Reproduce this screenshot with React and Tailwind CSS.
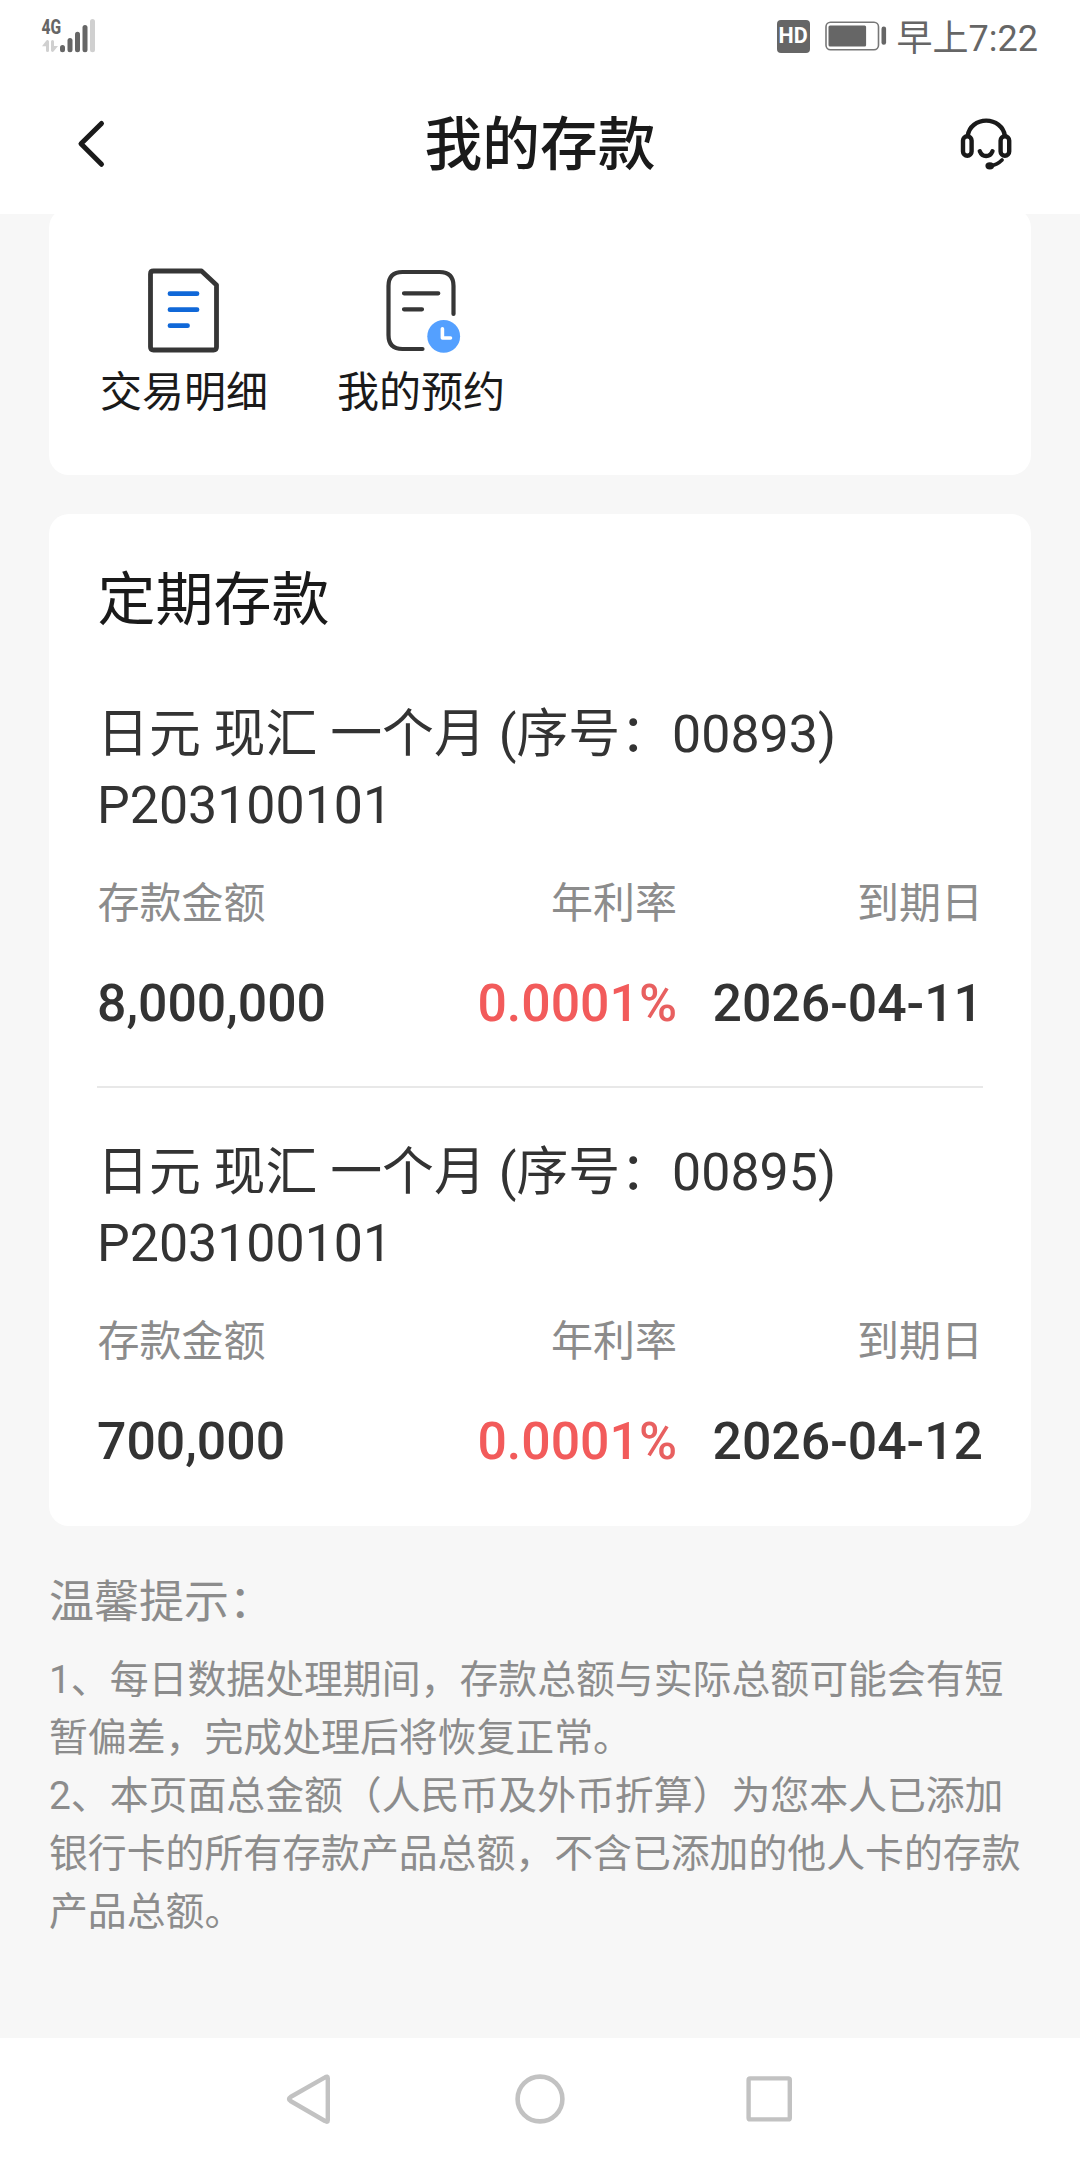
const deposits = [
  { name: '日元 现汇 一个月 (序号：00893)', code: 'P203100101', amount: '8,000,000', rate: '0.0001', due: '2026-04-11' },
  { name: '日元 现汇 一个月 (序号：00895)', code: 'P203100101', amount: '700,000', rate: '0.0001', due: '2026-04-12' },
];

const tips = [
  '1、每日数据处理期间，存款总额与实际总额可能会有短',
  '暂偏差，完成处理后将恢复正常。',
  '2、本页面总金额（人民币及外币折算）为您本人已添加',
  '银行卡的所有存款产品总额，不含已添加的他人卡的存款',
  '产品总额。',
];

function SignalIcon() {
  return (
    <svg width="66" height="44" viewBox="36 14 66 44" className="block overflow-visible">
      <text x="41.500" y="34" fontSize="20.500" fontWeight="800" textLength="19.600" lengthAdjust="spacingAndGlyphs" fill="#666">4G</text>
      <g fill="#d0d0d0">
        <path d="M47 40a1.700 1.700 0 0 1 2 1.600V50.500a1.500 1.500 0 0 1-3 0V46.200H42L46 41z" />
        <path d="M51 41.500a1.500 1.500 0 0 1 3 0V46H58L53.500 51.500a1.500 1.500 0 0 1-2.500-1z" />
        <rect x="90" y="19" width="5" height="33.300" rx="2.500" />
      </g>
      <g fill="#666">
        <rect x="60" y="45" width="5" height="7.300" rx="2.500" />
        <rect x="67.500" y="38" width="5" height="14.300" rx="2.500" />
        <rect x="75" y="31.700" width="5" height="20.600" rx="2.500" />
        <rect x="82.500" y="25" width="5" height="27.300" rx="2.500" />
      </g>
    </svg>
  );
}

function BatteryIcon() {
  return (
    <svg width="62" height="30" viewBox="825.500 21.500 62 30" className="block">
      <rect x="826.500" y="22.700" width="52.500" height="27.600" rx="4.500" fill="none" stroke="#777" strokeWidth="1.600" />
      <rect x="829" y="26" width="37.600" height="21" rx="1.500" fill="#666" />
      <rect x="882" y="27" width="4.600" height="18.300" rx="2.200" fill="#666" />
    </svg>
  );
}

function HeadsetIcon() {
  return (
    <svg width="54" height="54" viewBox="959 117 54 54" fill="none" stroke="#1a1a1a" strokeWidth="4.400" strokeLinecap="round" className="block">
      <path d="M967.800 135.500C969 126.500 977 120.600 986.200 120.600S1003.500 126.500 1004.800 135.500" />
      <rect x="963" y="136.300" width="8.600" height="19.400" rx="4.300" />
      <rect x="1000.600" y="136.300" width="8.600" height="19.400" rx="4.300" />
      <path d="M979.800 151.200C981 154.200 983.300 156 986.100 156S991.300 154.200 992.500 151.200" />
      <path d="M1002 160C999 163 996 165 991 165.600" strokeWidth="3.800" />
      <ellipse cx="989.800" cy="165.800" rx="4.400" ry="3.600" fill="#1a1a1a" stroke="none" />
    </svg>
  );
}

function DetailIcon() {
  return (
    <svg width="76" height="88" viewBox="146 266 76 88" fill="none" strokeWidth="4.800" strokeLinecap="round" strokeLinejoin="round" className="block">
      <path d="M153.500 271H201.500L216.500 285V347Q216.500 350 213.500 350H153.500Q150.500 350 150.500 347V274Q150.500 271 153.500 271Z" stroke="#363636" />
      <path d="M170 293.700H197M170 309.700H197M170 325.700H187.500" stroke="#1068d8" />
    </svg>
  );
}

function BookingIcon() {
  return (
    <svg width="78" height="88" viewBox="382 266 78 88" fill="none" strokeWidth="4.200" strokeLinecap="round" strokeLinejoin="round" className="block overflow-visible">
      <path d="M453.500 314V286Q453.500 272 439.500 272H402.500Q388.500 272 388.500 286V335Q388.500 349 402.500 349H422.500M404 293.300H438.300M404 309.300H422" stroke="#363636" />
      <circle cx="443.700" cy="336.300" r="16.400" fill="#54a0ff" />
      <path d="M442.400 328.800V338H450.500" stroke="#fff" strokeWidth="3.600" />
    </svg>
  );
}

function Deposit({ item }) {
  return (
    <div className="text-[#333]">
      <div className="whitespace-nowrap text-[51.880px] leading-[71px]">
        <p>{item.name}</p>
        <p>{item.code}</p>
      </div>
      <div className="mt-[33px] flex text-[42px] leading-[60px] text-[#8c8c8c]">
        <span className="w-[300px] pl-[0.600px]">存款金额</span>
        <span className="w-[280px] text-right">年利率</span>
        <span className="flex-1 text-right">到期日</span>
      </div>
      <div className="mt-[35px] flex whitespace-nowrap text-[51.760px] font-medium leading-[70px]">
        <span className="w-[300px]">{item.amount}</span>
        <span className="w-[280px] text-right text-[#f25b5b]">
          {item.rate}
          <span className="text-[#e86060]">%</span>
        </span>
        <span className="flex-1 text-right">{item.due}</span>
      </div>
    </div>
  );
}

export default function App() {
  return (
    <div className="flex h-[2160px] w-[1080px] flex-col overflow-hidden bg-[#f7f7f7] font-['Roboto','Noto_Sans_CJK_SC',sans-serif]">
      <div className="z-10 h-[214px] shrink-0 bg-white">
        <div className="flex h-[75px] items-center justify-between pb-[3px] pl-[36px] pr-[42px]">
          <SignalIcon />
          <div className="flex items-center">
            <span className="flex h-[33px] w-[33px] items-center justify-center rounded-[4px] bg-[#666] text-[21.500px] font-bold leading-none text-white">HD</span>
            <span className="ml-[15px]"><BatteryIcon /></span>
            <span className="ml-[10px] pt-[5px] text-[36px] leading-[36px] text-[#666]">早上7:22</span>
          </div>
        </div>
        <header className="flex h-[139px] items-center justify-between pb-[1px] pl-[76px] pr-[67px]">
          <svg width="54" height="54" viewBox="76 117 54 54" fill="none" stroke="#1a1a1a" strokeWidth="5" strokeLinecap="round" strokeLinejoin="round">
            <path d="M101.500 123.400L81 143.800L101.500 164.300" />
          </svg>
          <h1 className="pr-[9px] pt-[1px] text-[57.700px] font-medium leading-[70px] text-[#1a1a1a]">我的存款</h1>
          <HeadsetIcon />
        </header>
      </div>

      <main className="flex-1 px-[49px]">
        <section className="-mt-[6px] flex h-[267px] gap-[69px] rounded-[20px] bg-white pl-[51px] pt-[58px] text-[42px] leading-[52px] text-[#1a1a1a]">
          <div className="flex flex-col items-center">
            <DetailIcon />
            <span className="mt-[13px]">交易明细</span>
          </div>
          <div className="flex flex-col items-center">
            <BookingIcon />
            <span className="mt-[13px]">我的预约</span>
          </div>
        </section>

        <section className="mt-[39px] h-[1012px] rounded-[20px] bg-white px-[48px] pt-[46px]">
          <h2 className="pl-[0.500px] text-[58px] leading-[80px] text-[#1a1a1a]">定期存款</h2>
          <div className="mt-[59px]">
            <Deposit item={deposits[0]} />
            <div className="mb-[49px] mt-[47px] h-[2px] bg-[#e8e8e8]" />
            <Deposit item={deposits[1]} />
          </div>
        </section>

        <section className="text-[#8c8c8c]">
          <h3 className="pt-[47px] text-[45px] leading-[60px]">温馨提示：</h3>
          <div className="mt-[18px] whitespace-nowrap text-[38.860px] leading-[58px]">
            {tips.map((line) => (
              <p key={line}>{line}</p>
            ))}
          </div>
        </section>
      </main>

      <nav className="flex h-[122px] shrink-0 items-center justify-center gap-[178px] bg-white">
        <svg width="52" height="54" viewBox="284 2072 52 54" fill="none" stroke="#c2c2c2" strokeWidth="4.400" strokeLinejoin="round">
          <path d="M327.800 2078.200V2120.200Q327.800 2122.800 325 2121L290.500 2101Q287.500 2099 290.500 2097L325 2077.400Q327.800 2075.600 327.800 2078.200Z" />
        </svg>
        <svg width="52" height="54" viewBox="514 2072 52 54" fill="none" stroke="#c2c2c2" strokeWidth="4.600">
          <circle cx="540" cy="2099" r="22.400" />
        </svg>
        <svg width="52" height="54" viewBox="744 2072 52 54" fill="none" stroke="#c2c2c2" strokeWidth="4.400">
          <rect x="748.600" y="2078.400" width="41.200" height="41" rx="1.500" />
        </svg>
      </nav>
    </div>
  );
}
